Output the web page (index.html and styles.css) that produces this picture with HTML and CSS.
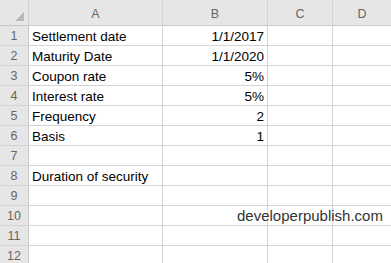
FILE: index.html
```html
<!DOCTYPE html>
<html>
<head>
<meta charset="utf-8">
<link rel="stylesheet" href="styles.css">
</head>
<body>
<div class="sheet">
  <div class="grid">
    <div class="corner"><span class="tri"></span></div>
    <div class="colhead">A</div>
    <div class="colhead">B</div>
    <div class="colhead">C</div>
    <div class="colhead last">D</div>

    <div class="rowhead">1</div><div class="cell">Settlement date</div><div class="cell num">1/1/2017</div><div class="cell"></div><div class="cell last"></div>
    <div class="rowhead">2</div><div class="cell">Maturity Date</div><div class="cell num">1/1/2020</div><div class="cell"></div><div class="cell last"></div>
    <div class="rowhead">3</div><div class="cell">Coupon rate</div><div class="cell num">5%</div><div class="cell"></div><div class="cell last"></div>
    <div class="rowhead">4</div><div class="cell">Interest rate</div><div class="cell num">5%</div><div class="cell"></div><div class="cell last"></div>
    <div class="rowhead">5</div><div class="cell">Frequency</div><div class="cell num">2</div><div class="cell"></div><div class="cell last"></div>
    <div class="rowhead">6</div><div class="cell">Basis</div><div class="cell num">1</div><div class="cell"></div><div class="cell last"></div>
    <div class="rowhead">7</div><div class="cell"></div><div class="cell num"></div><div class="cell"></div><div class="cell last"></div>
    <div class="rowhead">8</div><div class="cell">Duration of security</div><div class="cell num"></div><div class="cell"></div><div class="cell last"></div>
    <div class="rowhead">9</div><div class="cell"></div><div class="cell num"></div><div class="cell"></div><div class="cell last"></div>
    <div class="rowhead">10</div><div class="cell"></div><div class="cell num"></div><div class="cell"></div><div class="cell last"></div>
    <div class="rowhead">11</div><div class="cell"></div><div class="cell num"></div><div class="cell"></div><div class="cell last"></div>
    <div class="rowhead">12</div><div class="cell"></div><div class="cell num"></div><div class="cell"></div><div class="cell last"></div>
  </div>
  <div class="watermark">developerpublish.com</div>
</div>
</body>
</html>
```

FILE: styles.css
```css
html, body {
  margin: 0;
  padding: 0;
  background: #ffffff;
  overflow: hidden;
}
.sheet {
  position: relative;
  width: 391px;
  height: 263px;
  overflow: hidden;
  font-family: "Liberation Sans", Arial, sans-serif;
}
.grid {
  display: grid;
  grid-template-columns: 29px 134px 105px 65px 1fr;
  grid-template-rows: 26px repeat(12, 20px);
}
.grid > div {
  box-sizing: border-box;
}
.corner, .colhead, .rowhead {
  background: #e6e6e6;
  color: #666666;
  font-size: 12.5px;
}
.corner {
  position: relative;
  border-right: 1px solid #d0d0d0;
  border-bottom: 1px solid #c8c8c8;
}
.tri {
  position: absolute;
  left: 15px;
  top: 12px;
  width: 0;
  height: 0;
  border-left: 9px solid transparent;
  border-bottom: 9px solid #b8b8b8;
}
.colhead {
  display: flex;
  align-items: center;
  justify-content: center;
  padding-top: 2px;
  border-right: 1px solid #d4d4d4;
  border-bottom: 1px solid #c8c8c8;
}
.colhead.last, .cell.last {
  border-right: none;
}
.rowhead {
  display: flex;
  align-items: center;
  justify-content: center;
  padding-top: 1px;
  border-right: 1px solid #c8c8c8;
  border-bottom: 1px solid #d4d4d4;
}
.cell {
  border-right: 1px solid #d4d4d4;
  border-bottom: 1px solid #d4d4d4;
  font-size: 13.5px;
  color: #000000;
  padding: 2px 3px 0 3px;
  line-height: 17px;
  white-space: nowrap;
}
.cell.num {
  text-align: right;
}
.watermark {
  position: absolute;
  left: 237px;
  top: 207px;
  font-size: 15px;
  line-height: 17px;
  color: #333333;
  font-family: "Liberation Sans", Arial, sans-serif;
}
```
